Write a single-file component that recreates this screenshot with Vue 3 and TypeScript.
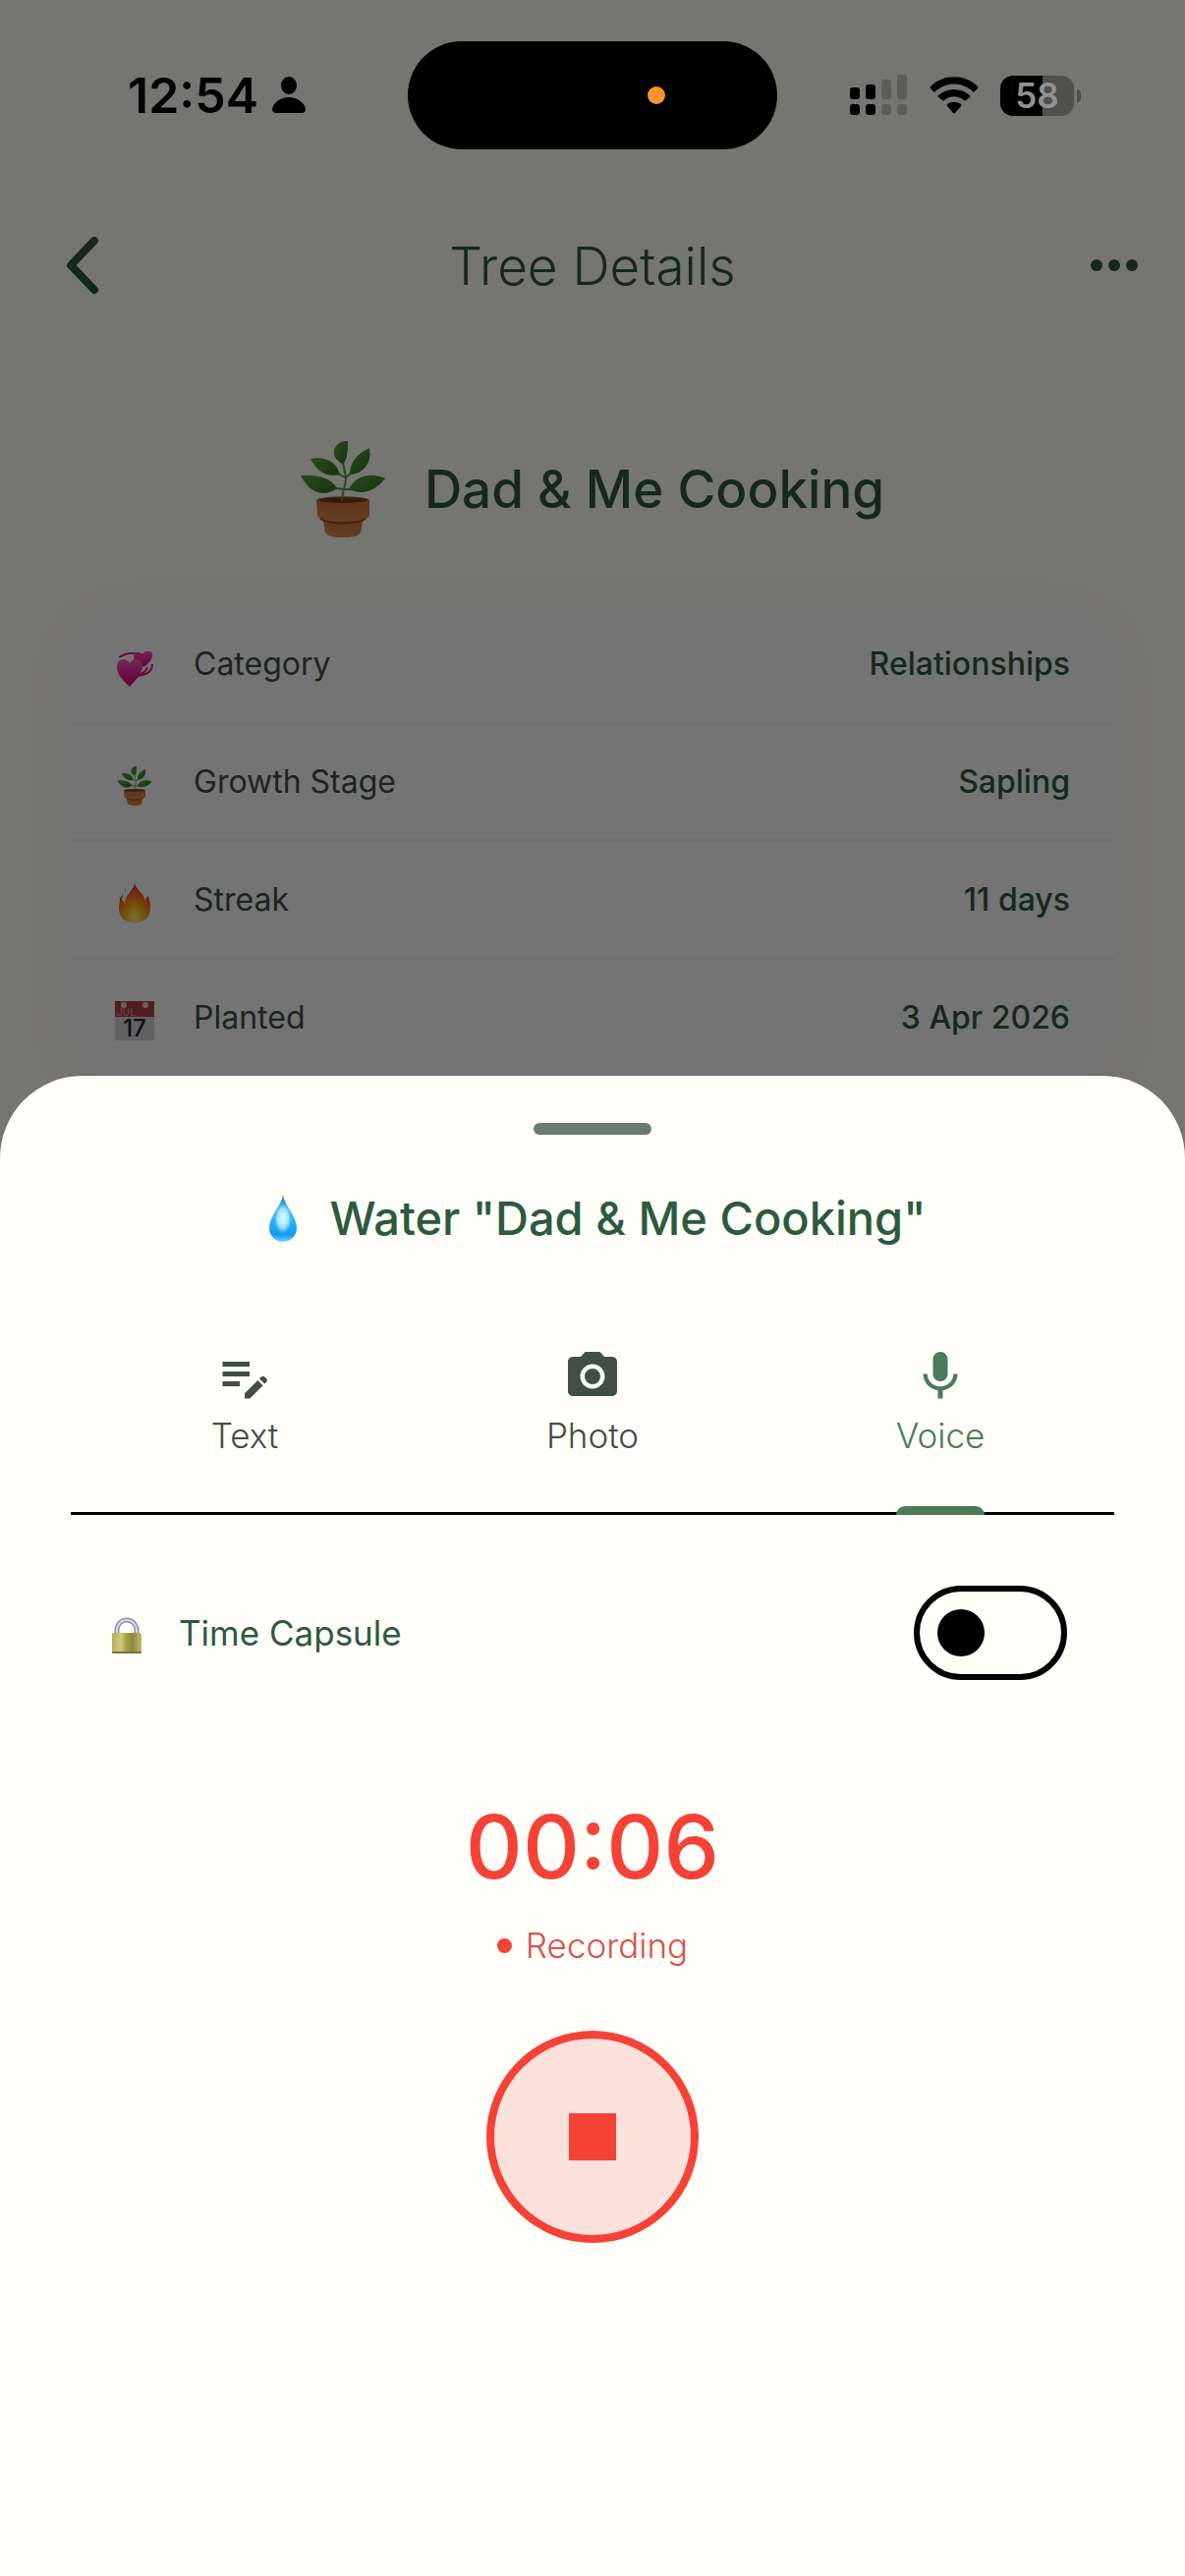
<script setup lang="ts">
import { ref } from 'vue'

type IconName = 'hearts' | 'plant' | 'flame' | 'calendar'

interface Detail {
  icon: IconName
  label: string
  value: string
}

const details: Detail[] = [
  { icon: 'hearts', label: 'Category', value: 'Relationships' },
  { icon: 'plant', label: 'Growth Stage', value: 'Sapling' },
  { icon: 'flame', label: 'Streak', value: '11 days' },
  { icon: 'calendar', label: 'Planted', value: '3 Apr 2026' },
]

const tabs = [
  {
    name: 'Text',
    path: 'M3 10h11v2H3v-2zm0-2h11V6H3v2zm0 8h7v-2H3v2zm15.01-3.13.71-.71c.39-.39 1.02-.39 1.41 0l.71.71c.39.39.39 1.02 0 1.41l-.71.71-2.12-2.12zm-.71.71-5.3 5.3V21h2.12l5.3-5.3-2.12-2.12z',
  },
  {
    name: 'Photo',
    path: 'M12 8.8a3.2 3.2 0 1 0 0 6.4 3.2 3.2 0 0 0 0-6.4zM9 2 7.17 4H4c-1.1 0-2 .9-2 2v12c0 1.1.9 2 2 2h16c1.1 0 2-.9 2-2V6c0-1.1-.9-2-2-2h-3.17L15 2H9zm3 15c-2.76 0-5-2.24-5-5s2.24-5 5-5 5 2.24 5 5-2.24 5-5 5z',
  },
  {
    name: 'Voice',
    path: 'M12 14c1.66 0 2.99-1.34 2.99-3L15 5c0-1.66-1.34-3-3-3S9 3.34 9 5v6c0 1.66 1.34 3 3 3zm5.3-3c0 3-2.54 5.1-5.3 5.1S6.7 14 6.7 11H5c0 3.41 2.72 6.23 6 6.72V21h2v-3.28c3.28-.48 6-3.3 6-6.72h-1.7z',
  },
]

const activeTab = ref('Voice')
const timeCapsule = ref(false)
</script>

<template>
  <div class="app">
    <svg class="sprite" aria-hidden="true">
      <defs>
        <linearGradient id="leaf" x1="0" y1="0" x2="1" y2="1">
          <stop offset="0" stop-color="#58a33c" />
          <stop offset="1" stop-color="#2f7420" />
        </linearGradient>
        <linearGradient id="pot" x1="0" y1="0" x2="0" y2="1">
          <stop offset="0" stop-color="#cf6e3e" />
          <stop offset="1" stop-color="#d98a4a" />
        </linearGradient>
        <linearGradient id="heart" x1="0" y1="0" x2="0" y2="1">
          <stop offset="0" stop-color="#ff4fc0" />
          <stop offset="1" stop-color="#d4007f" />
        </linearGradient>
        <radialGradient id="fire" cx="0.5" cy="0.86" r="0.8">
          <stop offset="0" stop-color="#fff36a" />
          <stop offset="0.4" stop-color="#ffab1c" />
          <stop offset="0.8" stop-color="#f4501e" />
          <stop offset="1" stop-color="#d8321c" />
        </radialGradient>
        <linearGradient id="drop" x1="0" y1="0" x2="0" y2="1">
          <stop offset="0" stop-color="#2f8fc4" />
          <stop offset="0.5" stop-color="#36b4f2" />
          <stop offset="0.85" stop-color="#0d9cf0" />
          <stop offset="1" stop-color="#7fd0fa" />
        </linearGradient>
        <radialGradient id="shine" cx="0.5" cy="0.5" r="0.5">
          <stop offset="0" stop-color="#e2fbff" />
          <stop offset="0.6" stop-color="#b5efff" stop-opacity="0.85" />
          <stop offset="1" stop-color="#7fdcff" stop-opacity="0" />
        </radialGradient>
        <linearGradient id="brass" x1="0" y1="0" x2="1" y2="0">
          <stop offset="0" stop-color="#b9b058" />
          <stop offset="0.3" stop-color="#d3cb78" />
          <stop offset="0.5" stop-color="#a79d4c" />
          <stop offset="0.7" stop-color="#8f8742" />
          <stop offset="1" stop-color="#c5bc6a" />
        </linearGradient>
      </defs>
      <symbol id="plant" viewBox="0 0 86 98">
        <path d="M22 76l3 17c3 7 33 7 36 0l3-17z" fill="url(#pot)" />
        <path d="M16 60c2-5 52-5 54 0v16c-3 8-51 8-53 0z" fill="url(#pot)" />
        <ellipse cx="43" cy="60" rx="25" ry="3" fill="#713c26" />
        <path d="M20 79c10 6 36 6 46 0" fill="none" stroke="#8b4b27" stroke-width="2" />
        <path d="M42 61c0-10 4-14 4-24L43 22M45 37l-7-4M46 37l6-5M43 49l-7-1M43 49l8 0" fill="none" stroke="#5f9a42" stroke-width="2" />
        <g fill="url(#leaf)">
          <path d="M48 0C37-1 30 10 36 18l7 6C48 18 48 8 48 0z" />
          <path d="M70 7C57 13 50 22 50 34 63 34 73 22 70 7z" />
          <path d="M10 18C26 15 37 22 40 34 26 37 17 31 10 18z" />
          <path d="M0 35C18 34 31 38 37 48 24 58 9 53 0 35z" />
          <path d="M86 38C70 31 55 36 49 49c13 6 26 3 37-11z" />
        </g>
      </symbol>
      <symbol id="hearts" viewBox="0 0 40 48">
        <path d="M4 17C12 12 20 12 27 15M38 24c0 9-9 12-16 12 6-2 10-4 11-9" fill="none" stroke="#d81391" stroke-width="2" />
        <path d="M29 27 20 20c-3-6 3-11 8-6 2-5 12-4 10 2-1 5-5 8-9 11z" fill="url(#heart)" />
        <path d="M15 47C8 40 2 35 2 27c0-8 9-11 13-4 4-7 14-4 13 4-1 8-7 13-13 20z" fill="url(#heart)" />
      </symbol>
      <symbol id="flame" viewBox="0 0 40 48">
        <path d="M20 7c-1 7-9 11-10 20l-4-5c-4 10-3 25 14 25 17 0 18-14 14-27-2 1-3 3-4 6C31 17 22 15 20 7z" fill="url(#fire)" />
        <path d="M9 18l-4 4v4zM10 14l1-1v3z" fill="#d8321c" />
      </symbol>
    </svg>

    <header class="status">
      <div class="clock">
        <time>12:54</time>
        <svg width="34" height="38" viewBox="0 0 34 38" aria-hidden="true">
          <ellipse cx="17" cy="9" rx="8" ry="9" />
          <path d="M4 37C1 37 0 35 0 33 1 27 8 21 17 21s16 6 17 12c0 2-1 4-4 4z" />
        </svg>
      </div>
      <div class="island"><i class="mic-dot"></i></div>
      <div class="indicators">
        <svg width="59" height="42" viewBox="0 0 59 42" aria-hidden="true">
          <rect y="13" width="10" height="12" rx="3" />
          <rect x="16" y="10" width="10" height="15" rx="3" />
          <rect y="30" width="10" height="11" rx="3" />
          <rect x="16" y="30" width="10" height="11" rx="3" />
          <g fill="#5c5c5a">
            <rect x="32" y="5" width="10" height="20" rx="3" />
            <rect x="48" width="10" height="25" rx="3" />
            <rect x="32" y="30" width="10" height="11" rx="3" />
            <rect x="48" y="30" width="10" height="11" rx="3" />
          </g>
        </svg>
        <svg width="50" height="38" viewBox="0 0 50 38" aria-hidden="true">
          <path d="M1 10C14-3 36-3 49 10q1 1 0 2l-3 3q-1 1-2 0C33 5 17 5 6 15q-1 1-2 0l-3-3q-1-1 0-2z" />
          <path d="M9 19c9-8 23-8 32 0q1 1 0 2l-4 3q-1 1-2 0c-6-5-14-5-20 0q-1 1-2 0l-4-3q-1-1 0-2z" />
          <path d="M18 28c4-3 10-3 14 0q1 1 0 2l-6 7q-1 1-2 0l-6-7q-1-1 0-2z" />
        </svg>
        <div class="battery"><span class="level">58</span><i class="nub"></i></div>
      </div>
    </header>

    <main class="page">
      <nav class="navbar">
        <button class="nav-button" aria-label="Back">
          <svg width="36" height="60" viewBox="0 0 36 60">
            <path d="M30 5 6 30l24 25" fill="none" stroke="currentColor" stroke-width="8" stroke-linecap="round" stroke-linejoin="round" />
          </svg>
        </button>
        <h1 class="nav-title">Tree Details</h1>
        <button class="nav-button more" aria-label="More options">
          <svg width="48" height="12" viewBox="0 0 48 12" fill="currentColor">
            <circle cx="6" cy="6" r="6" />
            <circle cx="24" cy="6" r="6" />
            <circle cx="42" cy="6" r="6" />
          </svg>
        </button>
      </nav>

      <section class="tree">
        <svg class="tree-icon" aria-hidden="true"><use href="#plant" /></svg>
        <h2 class="tree-name">Dad &amp; Me Cooking</h2>
      </section>

      <dl class="card">
        <div v-for="item in details" :key="item.label" class="row">
          <dt class="row-label">
            <svg v-if="item.icon === 'calendar'" class="row-icon" viewBox="0 0 40 48" aria-hidden="true">
              <rect y="7" width="40" height="40" fill="#d4d4d8" />
              <rect y="7" width="40" height="16" fill="#b3404a" />
              <circle cx="9" cy="11" r="3" fill="#e4d4d6" />
              <circle cx="31" cy="11" r="3" fill="#e4d4d6" />
              <text x="2" y="22" class="month">JUL</text>
              <text x="20" y="43" text-anchor="middle" class="day">17</text>
            </svg>
            <svg v-else class="row-icon" :class="item.icon" aria-hidden="true"><use :href="'#' + item.icon" /></svg>
            {{ item.label }}
          </dt>
          <dd class="row-value">{{ item.value }}</dd>
        </div>
      </dl>
    </main>

    <div class="scrim"></div>

    <section class="sheet" role="dialog" aria-labelledby="sheet-title">
      <div class="handle"></div>
      <h2 id="sheet-title" class="sheet-title">
        <svg width="48" height="48" viewBox="0 0 48 48" aria-hidden="true">
          <path d="M24 0c2 12 14 22 14 34a14 14 0 0 1-28 0C10 22 22 12 24 0z" fill="url(#drop)" />
          <ellipse cx="24" cy="24" rx="9" ry="16" fill="url(#shine)" />
        </svg>
        <span>Water "Dad &amp; Me Cooking"</span>
      </h2>

      <div class="tabs" role="tablist">
        <button
          v-for="tab in tabs"
          :key="tab.name"
          class="tab"
          :class="{ active: tab.name === activeTab }"
          role="tab"
          :aria-selected="tab.name === activeTab"
          @click="activeTab = tab.name"
        >
          <span class="tab-body">
            <svg class="tab-icon" viewBox="0 0 24 24" fill="currentColor" aria-hidden="true"><path :d="tab.path" /></svg>
            <span class="tab-label">{{ tab.name }}</span>
            <i class="tab-mark"></i>
          </span>
        </button>
      </div>

      <div class="capsule">
        <label class="capsule-label" for="capsule">
          <svg width="30" height="42" viewBox="0 0 30 42" aria-hidden="true">
            <path d="M5 24V18a10 10 0 0 1 20 0v6" fill="none" stroke="#8d92ac" stroke-width="5" />
            <path d="M5 24V18a10 10 0 0 1 20 0v6" fill="none" stroke="#d5d8e8" stroke-width="2" />
            <rect y="21" width="30" height="21" rx="1" fill="url(#brass)" />
            <rect y="40" width="30" height="2" rx="1" fill="#77703a" />
          </svg>
          Time Capsule
        </label>
        <input id="capsule" v-model="timeCapsule" class="switch" type="checkbox" role="switch" />
      </div>

      <div class="recorder">
        <div class="timer">00:06</div>
        <div class="state"><i class="state-dot"></i>Recording</div>
        <button class="stop" aria-label="Stop recording"><i class="stop-mark"></i></button>
      </div>
    </section>
  </div>
</template>

<style>
body {
  margin: 0;
  background: #fffef9;
}
</style>

<style scoped>
.app {
  position: relative;
  min-height: 100vh;
  overflow: hidden;
  background: #fffef9;
  color: #2d5a3d;
  font-family: Inter, "Liberation Sans", sans-serif;
}

button {
  border: 0;
  padding: 0;
  background: none;
  color: inherit;
  font: inherit;
}

h1,
h2,
dl,
dd {
  margin: 0;
}

svg {
  display: block;
  flex: none;
}

.sprite {
  position: absolute;
  width: 0;
  height: 0;
}

.status {
  position: relative;
  z-index: 2;
  display: grid;
  grid-template-columns: 1fr 376px 1fr;
  align-items: center;
  height: 110px;
  padding: 42px 0 34px;
  color: #000;
}

.clock {
  display: flex;
  align-items: center;
  gap: 14px;
  padding-left: 130px;
  font-size: 50px;
  font-weight: 600;
  line-height: 60px;
}

.island {
  display: flex;
  align-items: center;
  justify-content: flex-end;
  height: 110px;
  border-radius: 55px;
  background: #000;
}

.mic-dot {
  width: 18px;
  height: 18px;
  margin-right: 114px;
  border-radius: 50%;
  background: #ff9230;
}

.indicators {
  display: flex;
  align-items: center;
  justify-content: flex-end;
  gap: 22px;
  padding-right: 113px;
}

.battery {
  position: relative;
  width: 75px;
  height: 41px;
  border-radius: 13px;
  background: linear-gradient(to right, #000 58%, #4f4f4d 58%);
  color: #929290;
  font-size: 35px;
  font-weight: 600;
  line-height: 41px;
  text-align: center;
}

.nub {
  position: absolute;
  top: 14px;
  right: -7px;
  width: 4px;
  height: 13px;
  border-radius: 0 4px 4px 0;
  background: #4f4f4d;
}

.navbar {
  display: grid;
  grid-template-columns: 1fr auto 1fr;
  align-items: center;
  height: 168px;
  padding: 0 48px 0 66px;
}

.nav-button {
  justify-self: start;
}

.nav-button.more {
  justify-self: end;
}

.nav-title {
  padding: 2px 18px 0 0;
  font-size: 53px;
  font-weight: 300;
  line-height: 60px;
}

.tree {
  display: flex;
  align-items: center;
  justify-content: center;
  gap: 40px;
  height: 132px;
  margin-top: 78px;
}

.tree-icon {
  width: 86px;
  height: 98px;
}

.tree-name {
  font-size: 53px;
  font-weight: 500;
  line-height: 60px;
}

.card {
  margin: 53px 72px 0;
  border-radius: 48px;
  background: #fdfcfc;
  box-shadow: 0 12px 60px rgba(80, 60, 20, 0.04);
}

.row {
  display: flex;
  align-items: center;
  justify-content: space-between;
  box-sizing: border-box;
  height: 120px;
  padding: 0 45px;
  border-bottom: 3px solid #f3f2f2;
  font-size: 32px;
  line-height: 48px;
}

.row-label {
  display: flex;
  align-items: center;
  gap: 40px;
  color: #3f4f44;
}

.row-icon {
  width: 40px;
  height: 48px;
}

.row-icon.plant {
  height: 40px;
  margin-top: 8px;
}

.row-value {
  font-weight: 500;
}

.month {
  fill: #d9a0a5;
  font-size: 10px;
}

.day {
  fill: #222;
  font-size: 24px;
  font-weight: 500;
}

.scrim {
  position: absolute;
  inset: 0;
  background: rgba(0, 0, 0, 0.54);
}

.sheet {
  position: absolute;
  right: 0;
  bottom: 0;
  left: 0;
  padding: 48px 72px 339px;
  border-radius: 84px 84px 0 0;
  background: #fffef9;
}

.handle {
  width: 120px;
  height: 12px;
  margin: 0 auto;
  border-radius: 6px;
  background: #6b7b6f;
}

.sheet-title {
  display: flex;
  align-items: center;
  justify-content: center;
  gap: 24px;
  margin-top: 55px;
  font-size: 47px;
  font-weight: 500;
  line-height: 60px;
}

.tabs {
  display: flex;
  margin-top: 101px;
  border-bottom: 3px solid #000;
}

.tab {
  display: flex;
  flex: 1;
  justify-content: center;
  color: #3f4f44;
}

.tab-body {
  display: flex;
  flex-direction: column;
  align-items: center;
  margin-bottom: -3px;
}

.tab-icon {
  width: 60px;
  height: 60px;
}

.tab-label {
  margin-top: 6px;
  font-size: 35px;
  font-weight: 300;
  line-height: 48px;
}

.tab-mark {
  align-self: stretch;
  height: 9px;
  margin-top: 48px;
  border-radius: 9px 9px 0 0;
}

.tab.active {
  color: #4a7c59;
}

.active .tab-mark {
  background: #4a7c59;
}

.capsule {
  display: flex;
  align-items: center;
  justify-content: space-between;
  margin-top: 72px;
  padding: 0 48px 0 42px;
}

.capsule-label {
  display: flex;
  align-items: center;
  gap: 38px;
  font-size: 35px;
  line-height: 48px;
}

.switch {
  display: flex;
  align-items: center;
  box-sizing: border-box;
  width: 156px;
  height: 96px;
  margin: 0;
  padding: 0 18px;
  border: 6px solid #000;
  border-radius: 48px;
  appearance: none;
}

.switch::before {
  width: 48px;
  height: 48px;
  border-radius: 50%;
  background: #000;
  content: "";
}

.switch:checked {
  justify-content: flex-end;
}

.recorder {
  display: flex;
  flex-direction: column;
  align-items: center;
  margin-top: 122px;
  color: #f44336;
}

.timer {
  font-size: 90px;
  font-weight: 500;
  line-height: 96px;
}

.state {
  display: flex;
  align-items: center;
  gap: 14px;
  margin-top: 28px;
  color: #d9534a;
  font-size: 35px;
  font-weight: 300;
  line-height: 48px;
}

.state-dot {
  width: 15px;
  height: 15px;
  border-radius: 50%;
  background: #f44336;
}

.stop {
  display: flex;
  align-items: center;
  justify-content: center;
  width: 216px;
  height: 216px;
  margin-top: 63px;
  border: 8px solid #f44336;
  border-radius: 50%;
  background: #fce1db;
}

.stop-mark {
  width: 48px;
  height: 48px;
  background: #f44336;
}
</style>
